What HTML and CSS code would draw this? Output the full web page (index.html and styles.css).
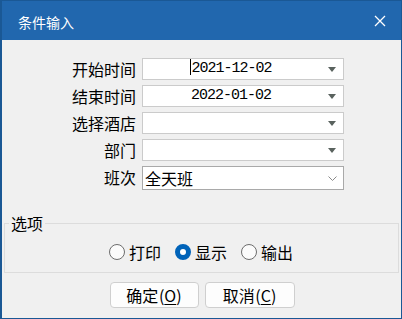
FILE: index.html
```html
<!DOCTYPE html>
<html lang="zh-CN">
<head>
    <meta charset="UTF-8">
    <title>条件输入</title>
    <link rel="stylesheet" href="styles.css">
</head>
<body>

	<div class="window">

		<div class="titlebar">
			<span class="title">条件输入</span>
			<svg class="close" width="12" height="12" viewBox="0 0 12 12">
				<path d="M1 1 L11 11 M11 1 L1 11" stroke="#fff" stroke-width="1.3" fill="none"/>
			</svg>
		</div>

		<div class="content">

			<div class="form">
				<label>开始时间</label>
				<div class="field">
					<span class="value date"><span class="caret"></span>2021-12-02</span>
					<span class="arrow"></span>
				</div>

				<label>结束时间</label>
				<div class="field">
					<span class="value date">2022-01-02</span>
					<span class="arrow"></span>
				</div>

				<label>选择酒店</label>
				<div class="field">
					<span class="value"></span>
					<span class="arrow"></span>
				</div>

				<label>部门</label>
				<div class="field">
					<span class="value"></span>
					<span class="arrow"></span>
				</div>

				<label>班次</label>
				<div class="field combo">
					<span class="value">全天班</span>
					<svg class="chevron" width="9" height="5" viewBox="0 0 9 5">
						<polyline points="0.5,0.5 4.5,4.5 8.5,0.5" stroke="#8a8a8a" stroke-width="1" fill="none"/>
					</svg>
				</div>
			</div>

			<fieldset class="group">
				<legend>选项</legend>
				<div class="radios">
					<span class="radio"><span class="dot"></span>打印</span>
					<span class="radio"><span class="dot checked"></span>显示</span>
					<span class="radio"><span class="dot"></span>输出</span>
				</div>
			</fieldset>

			<div class="buttons">
				<button type="button" class="btn">确定 (<u>O</u>)</button>
				<button type="button" class="btn wide">取消 (<u>C</u>)</button>
			</div>

		</div>

	</div>

</body>
</html>
```

FILE: styles.css
```css
		:root {
			--title-blue: #2167ae;
			--frame-blue: #1a5895;
			--face: #f0f0f0;
			--field-border: #cbcbcb;
		}
		body {
			margin: 0;
			font-family: "Noto Sans CJK SC", "Noto Sans", sans-serif;
			color: #000;
		}
		.window {
			width: 402px;
			height: 319px;
			box-sizing: border-box;
			border: 1px solid var(--frame-blue);
			border-left-width: 2px;
			background: var(--face);
			display: flex;
			flex-direction: column;
		}
		.titlebar {
			height: 39px;
			background: var(--title-blue);
			color: #fff;
			display: flex;
			align-items: center;
			justify-content: space-between;
			padding: 3px 15px 0 16px;
			box-sizing: border-box;
		}
		.title {
			font-size: 14px;
			line-height: 18px;
		}
		.close {
			margin-top: -2px;
		}
		.content {
			padding-top: 18px;
		}

		/* form rows */
		.form {
			display: grid;
			grid-template-columns: 134px 202px;
			grid-auto-rows: 22px;
			column-gap: 6px;
			row-gap: 5px;
		}
		.form label {
			text-align: right;
			font-size: 16px;
			line-height: 22px;
		}
		.field {
			background: #fff;
			border: 1px solid var(--field-border);
			box-sizing: border-box;
			display: flex;
			align-items: center;
		}
		.field .value {
			flex: 1;
			font-size: 16px;
			line-height: 20px;
			padding-left: 2px;
		}
		.field .date {
			text-align: center;
			font-family: "Liberation Mono", monospace;
			font-size: 15px;
			letter-spacing: -1px;
			padding-right: 11px;
		}
		.caret {
			display: inline-block;
			width: 1px;
			height: 16px;
			background: #000;
			vertical-align: -3px;
			margin-right: 0;
		}
		.arrow {
			width: 0;
			height: 0;
			border-left: 4.5px solid transparent;
			border-right: 4.5px solid transparent;
			border-top: 5px solid #59625e;
			margin-right: 7px;
		}
		.combo {
			height: 24px;
			border-color: #a9a9a9;
		}
		.chevron {
			margin-right: 6px;
		}

		/* options group */
		.group {
			margin: 24px 2px 0 2px;
			padding: 0 4px 10px 4px;
			border: 1px solid #dcdcdc;
		}
		.group legend {
			font-size: 16px;
			line-height: 22px;
			padding: 0 2px;
		}
		.radios {
			display: flex;
			padding-left: 100px;
			margin-top: 8px;
			height: 20px;
			align-items: center;
			gap: 14px;
			font-size: 16px;
			line-height: 20px;
		}
		.radio {
			display: flex;
			align-items: center;
			gap: 4px;
		}
		.dot {
			width: 16px;
			height: 16px;
			box-sizing: border-box;
			border-radius: 50%;
			border: 1px solid #6d6d6d;
			background: #fbfbfb;
		}
		.dot.checked {
			border: 5px solid #0063b9;
			background: #fff;
		}

		/* buttons */
		.buttons {
			display: flex;
			justify-content: center;
			gap: 6px;
			margin-top: 9px;
			padding-left: 1px;
		}
		.btn {
			width: 89px;
			height: 26px;
			background: #fdfdfd;
			border: 1px solid #cfcfcf;
			border-radius: 4px;
			font-family: "Noto Sans CJK SC", "Noto Sans", sans-serif;
			font-size: 16px;
			line-height: 20px;
			padding: 0;
			color: #000;
			word-spacing: -3px;
		}
		.btn.wide {
			width: 90px;
		}
		.btn u {
			text-underline-offset: 2px;
		}
```
